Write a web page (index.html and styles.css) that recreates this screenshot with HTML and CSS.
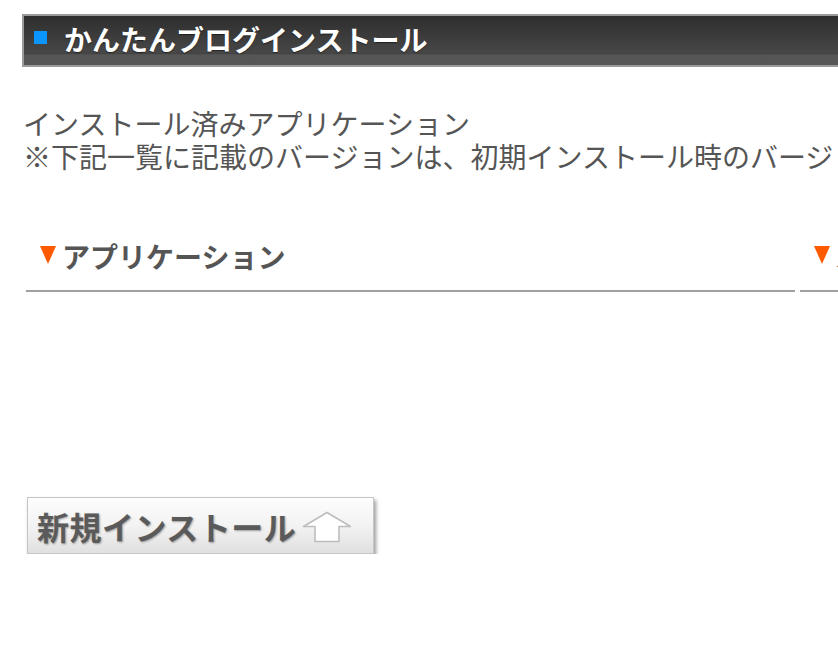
FILE: index.html
```html
<!DOCTYPE html>
<html lang="ja">
<head>
<meta charset="utf-8">
<title>かんたんブログインストール</title>
<link rel="stylesheet" href="styles.css">
</head>
<body>
<div class="page">
  <h1 class="title-bar"><span class="title-mark"></span><span class="title-text">かんたんブログインストール</span></h1>
  <div class="intro">
    <p>インストール済みアプリケーション</p>
    <p>※下記一覧に記載のバージョンは、初期インストール時のバージョンです。</p>
  </div>
  <div class="table-head">
    <div class="th th-app"><span class="tri"></span>アプリケーション</div>
    <div class="th th-ver"><span class="tri"></span>バージョン</div>
  </div>
  <div class="actions">
    <a class="install-btn" href="#">
      <span class="btn-label">新規インストール</span>
      <svg class="btn-arrow" width="50" height="32" viewBox="0 0 50 32">
        <path d="M1.5 15.5 L25 1.5 L48.5 15.5 L37 15.5 L37 30.5 L13 30.5 L13 15.5 Z" fill="#fff" stroke="#bdbdbd" stroke-width="1.6" stroke-linejoin="round"/>
      </svg>
    </a>
  </div>
</div>
</body>
</html>
```
FILE: styles.css
```css
html, body {
  margin: 0;
  padding: 0;
  background: #fff;
  overflow: hidden;
}
body {
  font-family: "Noto Sans CJK JP", "Noto Sans", sans-serif;
  color: #555;
}
.page {
  width: 1200px;
  padding: 14px 0 0 22px;
}
.title-bar {
  margin: 0;
  height: 49px;
  border: 2px solid #9a9a9a;
  background: linear-gradient(to bottom, #2e2e2e 0%, #474747 76%, #3f3f3f 77%, #555 79%, #565656 100%);
  display: flex;
  align-items: center;
  padding-left: 10px;
}
.title-mark {
  width: 13px;
  height: 13px;
  background: #0a95ff;
  margin-right: 17px;
  margin-top: -6px;
}
.title-text {
  color: #fff;
  font-size: 28px;
  font-weight: 700;
  line-height: 1;
  margin-top: -4px;
  text-shadow: 0 1px 1px rgba(0,0,0,0.5);
}
.intro {
  margin-top: 40px;
  padding-left: 1px;
  font-size: 28px;
  line-height: 33px;
  white-space: nowrap;
}
.intro p {
  margin: 0;
}
.table-head {
  display: flex;
  gap: 5px;
  margin-top: 67px;
  margin-left: 4px;
}
.th {
  font-size: 28px;
  font-weight: 700;
  line-height: 33px;
  padding: 0 0 17px 14px;
  border-bottom: 2px solid #a0a0a0;
  display: flex;
  align-items: center;
  white-space: nowrap;
  color: #555;
}
.th-app {
  width: 755px;
}
.th-ver {
  width: 300px;
}
.tri {
  width: 0;
  height: 0;
  border-left: 8px solid transparent;
  border-right: 8px solid transparent;
  border-top: 18px solid #ff5a00;
  margin-right: 6px;
  margin-top: -4px;
}
.actions {
  margin-top: 205px;
  margin-left: 5px;
}
.install-btn {
  display: flex;
  align-items: center;
  width: 345px;
  height: 55px;
  border: 1px solid #c6c6c6;
  background: linear-gradient(to bottom, #fdfdfd 0%, #f3f3f3 50%, #e0e0e0 100%);
  box-shadow: 2px 3px 4px rgba(0,0,0,0.4);
  text-decoration: none;
  box-sizing: content-box;
}
.btn-label {
  font-size: 32px;
  font-weight: 700;
  color: #5a5a5a;
  line-height: 1;
  margin-left: 9px;
  letter-spacing: 0.5px;
  text-shadow: 1px 1px 2px rgba(0,0,0,0.35);
}
.btn-arrow {
  margin-left: 6px;
  margin-top: 2px;
}
```
